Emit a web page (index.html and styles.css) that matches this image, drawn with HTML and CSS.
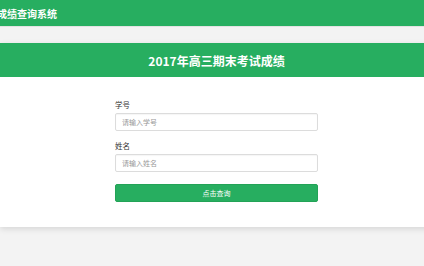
FILE: index.html
```html
<!DOCTYPE html>
<html lang="zh-CN">
<head>
<meta charset="utf-8">
<title>成绩查询系统</title>
<link rel="stylesheet" href="styles.css">
</head>
<body>
<header class="topbar"><span class="brand">成绩查询系统</span></header>
<main class="page">
  <section class="card">
    <div class="card-head">2017年高三期末考试成绩</div>
    <form class="card-body">
      <label class="field-label" for="sid">学号</label>
      <input class="field-input" id="sid" type="text" placeholder="请输入学号">
      <label class="field-label second" for="sname">姓名</label>
      <input class="field-input" id="sname" type="text" placeholder="请输入姓名">
      <button class="submit" type="button">点击查询</button>
    </form>
  </section>
</main>
</body>
</html>
```
FILE: styles.css
```css
* { box-sizing: border-box; }
html, body { margin: 0; padding: 0; }
body {
  background: #f3f3f3;
  font-family: "Noto Sans CJK SC", "Noto Sans", sans-serif;
  width: 424px;
  height: 266px;
  overflow: hidden;
}
.topbar {
  height: 27px;
  background: #27ae60;
  border-bottom: 1px solid #e2e2e2;
  display: flex;
  align-items: center;
}
.brand {
  color: #fff;
  font-weight: bold;
  font-size: 10px;
  line-height: 1;
  margin-left: -3px;
  margin-top: 1px;
  white-space: nowrap;
}
.page {
  padding-top: 16px;
  width: 433px;
}
.card {
  background: #fff;
  box-shadow: 0 2px 6px rgba(0, 0, 0, 0.12);
}
.card-head {
  height: 34px;
  background: #27ae60;
  color: #fff;
  font-weight: bold;
  font-size: 12px;
  display: flex;
  align-items: center;
  justify-content: center;
}
.card-body {
  width: 203px;
  margin: 0 auto;
  padding: 23px 0 25px;
  display: flex;
  flex-direction: column;
}
.field-label {
  font-size: 7.5px;
  line-height: 10px;
  height: 10px;
  color: #333;
  margin-bottom: 3px;
}
.field-label.second {
  margin-top: 10px;
}
.field-input {
  height: 18px;
  border: 1px solid #dcdcdc;
  border-radius: 2px;
  padding: 0 6px;
  font-size: 7px;
  font-family: inherit;
  color: #333;
  box-shadow: inset 0 1px 1px rgba(0,0,0,0.04);
  outline: none;
}
.field-input::placeholder {
  color: #999;
}
.submit {
  margin-top: 12px;
  height: 18px;
  border: 1px solid #23a357;
  border-radius: 2px;
  background: #27ae60;
  color: #fff;
  font-size: 7px;
  font-family: inherit;
  padding: 0;
}
```
